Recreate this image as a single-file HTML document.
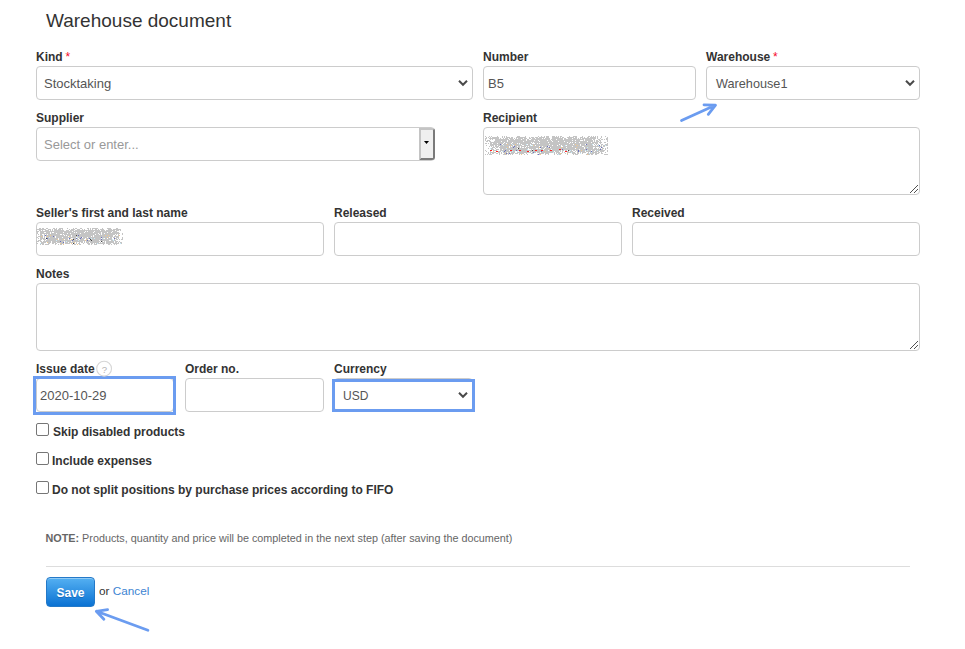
<!DOCTYPE html>
<html><head><meta charset="utf-8">
<style>
html,body{margin:0;padding:0;background:#fff;width:965px;height:649px;overflow:hidden;position:relative;font-family:"Liberation Sans",sans-serif;}
.a{position:absolute;}
.t{position:absolute;white-space:nowrap;line-height:14px;}
.lbl{font-weight:bold;font-size:12px;color:#333;}
.box{position:absolute;box-sizing:border-box;border:1px solid #ccc;border-radius:4px;background:#fff;}
.val{position:absolute;white-space:nowrap;font-size:13px;line-height:14px;color:#555;}
.req{color:#f50a2a;font-weight:normal;margin-left:-0.5px;}
.chev{position:absolute;}
.cb{position:absolute;box-sizing:border-box;width:13px;height:13px;border:1px solid #767676;border-radius:2px;background:#fff;}
.blue{position:absolute;box-sizing:border-box;border:3px solid #6b9cf0;}
</style></head>
<body>
<!-- title -->
<div class="t" style="left:46px;top:10.8px;font-size:19px;line-height:20px;color:#333;">Warehouse document</div>

<!-- Row 1 -->
<div class="t lbl" style="left:36px;top:50px;">Kind <span class="req">*</span></div>
<div class="box" style="left:36px;top:66px;width:437px;height:34px;"></div>
<div class="val" style="left:44px;top:77px;">Stocktaking</div>
<svg class="chev" style="left:452px;top:74px" width="22" height="18"><polyline points="7,6.8 11,10.8 15,6.8" fill="none" stroke="#4a4a4a" stroke-width="2"/></svg>

<div class="t lbl" style="left:483px;top:50px;">Number</div>
<div class="box" style="left:483px;top:66px;width:213px;height:34px;"></div>
<div class="val" style="left:488px;top:77px;">B5</div>

<div class="t lbl" style="left:706px;top:50px;">Warehouse <span class="req">*</span></div>
<div class="box" style="left:706px;top:66px;width:214px;height:34px;"></div>
<div class="val" style="left:716px;top:77px;font-size:12.7px;">Warehouse1</div>
<svg class="chev" style="left:899px;top:74px" width="22" height="18"><polyline points="7,6.8 11,10.8 15,6.8" fill="none" stroke="#4a4a4a" stroke-width="2"/></svg>

<!-- Row 2 -->
<div class="t lbl" style="left:36px;top:111px;">Supplier</div>
<div class="box" style="left:36px;top:127px;width:399px;height:34px;"></div>
<div class="val" style="left:44px;top:138px;color:#999;">Select or enter...</div>
<div class="a" style="left:419px;top:128px;width:16px;height:32px;box-sizing:border-box;background:#efefef;border-left:2px solid #c4c4c4;border-top:2px solid #c4c4c4;border-right:2px solid #7a7a7a;border-bottom:2px solid #7a7a7a;border-top-right-radius:3px;border-bottom-right-radius:3px;"></div>
<svg class="a" style="left:424px;top:141px" width="6" height="4"><polygon points="0,0 5,0 2.5,3" fill="#000"/></svg>

<div class="t lbl" style="left:483px;top:111px;">Recipient</div>
<div class="box" style="left:483px;top:127px;width:437px;height:68px;"></div>

<!-- Row 3 -->
<div class="t lbl" style="left:36px;top:206px;">Seller's first and last name</div>
<div class="box" style="left:36px;top:222px;width:288px;height:34px;"></div>
<div class="t lbl" style="left:334px;top:206px;">Released</div>
<div class="box" style="left:334px;top:222px;width:288px;height:34px;"></div>
<div class="t lbl" style="left:632px;top:206px;">Received</div>
<div class="box" style="left:632px;top:222px;width:288px;height:34px;"></div>

<!-- Row 4 -->
<div class="t lbl" style="left:36px;top:267px;">Notes</div>
<div class="box" style="left:36px;top:283px;width:884px;height:68px;"></div>

<!-- Row 5 -->
<div class="t lbl" style="left:36px;top:362px;">Issue date</div>
<div class="box" style="left:36px;top:378px;width:138px;height:34px;"></div>
<div class="val" style="left:40px;top:389px;">2020-10-29</div>
<div class="t lbl" style="left:185px;top:362px;">Order no.</div>
<div class="box" style="left:185px;top:378px;width:139px;height:34px;"></div>
<div class="t lbl" style="left:334px;top:362px;">Currency</div>
<div class="box" style="left:334px;top:378px;width:139px;height:34px;"></div>
<div class="val" style="left:343px;top:388.5px;font-size:12px;">USD</div>
<svg class="chev" style="left:452px;top:386px" width="22" height="18"><polyline points="7,6.8 11,10.8 15,6.8" fill="none" stroke="#4a4a4a" stroke-width="2"/></svg>

<div class="blue" style="left:33px;top:376px;width:143px;height:39px;"></div>
<div class="blue" style="left:332px;top:379px;width:143px;height:33px;"></div>

<!-- checkboxes -->
<div class="cb" style="left:36px;top:423px;"></div>
<div class="t lbl" style="left:53px;top:425px;">Skip disabled products</div>
<div class="cb" style="left:36px;top:452px;"></div>
<div class="t lbl" style="left:52px;top:454px;">Include expenses</div>
<div class="cb" style="left:36px;top:481px;"></div>
<div class="t lbl" style="left:52px;top:483px;">Do not split positions by purchase prices according to FIFO</div>

<!-- note -->
<div class="t" style="left:45.5px;top:531px;font-size:10.8px;color:#666;"><b style="color:#666">NOTE:</b> Products, quantity and price will be completed in the next step (after saving the document)</div>
<div class="a" style="left:46px;top:566px;width:864px;height:1px;background:#ddd;"></div>

<!-- buttons -->
<div class="a" style="left:46px;top:577px;width:49px;height:30px;box-sizing:border-box;border:1px solid #2479c8;border-radius:4px;background:linear-gradient(#54b0f2,#0b72d3);box-shadow:inset 0 1px 0 rgba(255,255,255,.35);"></div>
<div class="t" style="left:56.5px;top:585.5px;font-size:12px;font-weight:bold;color:#fff;text-shadow:0 1px 0 rgba(0,40,100,.3);">Save</div>
<div class="t" style="left:99px;top:583.6px;font-size:11.75px;color:#333;">or <span style="color:#3d84d2">Cancel</span></div>


<!-- question mark -->
<svg class="a" style="left:95px;top:360px" width="18" height="17"><circle cx="9.1" cy="8.7" r="7.4" fill="none" stroke="#d6d6d6" stroke-width="1.1"/><text x="9.3" y="13.1" text-anchor="middle" font-family="Liberation Sans" font-size="9.6" fill="#b4b4b4">?</text></svg>
<!-- resize handles -->
<svg class="a" style="left:0;top:0" width="965" height="649"><path fill="#505050" d="M910 192h1v1h-1zM911 191h1v1h-1zM912 190h1v1h-1zM913 189h1v1h-1zM914 188h1v1h-1zM915 187h1v1h-1zM916 186h1v1h-1zM917 185h1v1h-1zM914 192h1v1h-1zM915 191h1v1h-1zM916 190h1v1h-1zM917 189h1v1h-1zM910 348h1v1h-1zM911 347h1v1h-1zM912 346h1v1h-1zM913 345h1v1h-1zM914 344h1v1h-1zM915 343h1v1h-1zM916 342h1v1h-1zM917 341h1v1h-1zM914 348h1v1h-1zM915 347h1v1h-1zM916 346h1v1h-1zM917 345h1v1h-1z"/></svg>
<!-- blobs -->
<svg class="a" style="left:0;top:0" width="965" height="649"><path fill="#c4c4c4" d="M485 136h1v1h-1zM489 136h1v1h-1zM491 136h1v1h-1zM497 136h1v1h-1zM502 136h1v1h-1zM504 136h1v1h-1zM506 136h1v1h-1zM517 136h3v1h-3zM525 136h1v1h-1zM538 136h1v1h-1zM541 136h1v1h-1zM544 136h1v1h-1zM546 136h3v1h-3zM552 136h3v1h-3zM556 136h1v1h-1zM558 136h1v1h-1zM560 136h2v1h-2zM569 136h1v1h-1zM573 136h4v1h-4zM582 136h1v1h-1zM588 136h2v1h-2zM591 136h1v1h-1zM593 136h1v1h-1zM595 136h1v1h-1zM597 136h1v1h-1zM601 136h1v1h-1zM605 136h1v1h-1zM486 137h1v1h-1zM488 137h1v1h-1zM490 137h1v1h-1zM492 137h7v1h-7zM502 137h1v1h-1zM504 137h1v1h-1zM506 137h4v1h-4zM511 137h2v1h-2zM516 137h10v1h-10zM529 137h1v1h-1zM531 137h3v1h-3zM535 137h3v1h-3zM539 137h6v1h-6zM546 137h3v1h-3zM552 137h7v1h-7zM560 137h1v1h-1zM562 137h2v1h-2zM567 137h7v1h-7zM575 137h2v1h-2zM580 137h3v1h-3zM584 137h1v1h-1zM587 137h2v1h-2zM590 137h6v1h-6zM597 137h1v1h-1zM601 137h1v1h-1zM607 137h1v1h-1zM485 138h2v1h-2zM489 138h10v1h-10zM500 138h1v1h-1zM503 138h1v1h-1zM505 138h3v1h-3zM509 138h4v1h-4zM514 138h1v1h-1zM516 138h1v1h-1zM518 138h5v1h-5zM524 138h3v1h-3zM529 138h2v1h-2zM532 138h3v1h-3zM536 138h6v1h-6zM543 138h1v1h-1zM545 138h5v1h-5zM552 138h11v1h-11zM564 138h2v1h-2zM568 138h4v1h-4zM573 138h4v1h-4zM578 138h1v1h-1zM580 138h1v1h-1zM582 138h14v1h-14zM597 138h1v1h-1zM600 138h1v1h-1zM606 138h2v1h-2zM485 139h1v1h-1zM490 139h1v1h-1zM492 139h1v1h-1zM495 139h14v1h-14zM510 139h4v1h-4zM515 139h6v1h-6zM522 139h4v1h-4zM527 139h2v1h-2zM531 139h19v1h-19zM551 139h5v1h-5zM557 139h6v1h-6zM564 139h20v1h-20zM585 139h7v1h-7zM593 139h2v1h-2zM598 139h2v1h-2zM601 139h2v1h-2zM604 139h1v1h-1zM606 139h2v1h-2zM485 140h1v1h-1zM487 140h3v1h-3zM495 140h12v1h-12zM508 140h18v1h-18zM527 140h7v1h-7zM535 140h3v1h-3zM539 140h8v1h-8zM548 140h3v1h-3zM552 140h20v1h-20zM573 140h2v1h-2zM576 140h4v1h-4zM583 140h1v1h-1zM585 140h8v1h-8zM594 140h1v1h-1zM596 140h2v1h-2zM599 140h2v1h-2zM607 140h1v1h-1zM486 141h2v1h-2zM489 141h2v1h-2zM494 141h7v1h-7zM502 141h5v1h-5zM508 141h15v1h-15zM524 141h15v1h-15zM540 141h12v1h-12zM553 141h5v1h-5zM559 141h5v1h-5zM565 141h22v1h-22zM588 141h5v1h-5zM594 141h1v1h-1zM596 141h3v1h-3zM600 141h1v1h-1zM607 141h1v1h-1zM490 142h14v1h-14zM505 142h7v1h-7zM513 142h18v1h-18zM532 142h1v1h-1zM534 142h14v1h-14zM549 142h18v1h-18zM568 142h2v1h-2zM571 142h1v1h-1zM573 142h2v1h-2zM576 142h3v1h-3zM580 142h11v1h-11zM592 142h6v1h-6zM599 142h3v1h-3zM604 142h2v1h-2zM485 143h2v1h-2zM488 143h1v1h-1zM490 143h2v1h-2zM493 143h4v1h-4zM498 143h5v1h-5zM504 143h2v1h-2zM507 143h4v1h-4zM512 143h5v1h-5zM518 143h1v1h-1zM520 143h12v1h-12zM535 143h2v1h-2zM538 143h1v1h-1zM540 143h29v1h-29zM570 143h24v1h-24zM595 143h3v1h-3zM600 143h1v1h-1zM607 143h1v1h-1zM490 144h10v1h-10zM501 144h1v1h-1zM503 144h4v1h-4zM508 144h4v1h-4zM513 144h2v1h-2zM516 144h3v1h-3zM520 144h1v1h-1zM522 144h4v1h-4zM528 144h2v1h-2zM531 144h18v1h-18zM550 144h9v1h-9zM560 144h13v1h-13zM574 144h1v1h-1zM576 144h4v1h-4zM581 144h4v1h-4zM587 144h5v1h-5zM594 144h1v1h-1zM596 144h1v1h-1zM598 144h1v1h-1zM601 144h2v1h-2zM605 144h3v1h-3zM486 145h1v1h-1zM490 145h4v1h-4zM495 145h2v1h-2zM498 145h5v1h-5zM504 145h6v1h-6zM511 145h2v1h-2zM514 145h8v1h-8zM524 145h6v1h-6zM534 145h1v1h-1zM536 145h16v1h-16zM553 145h4v1h-4zM558 145h3v1h-3zM562 145h3v1h-3zM567 145h10v1h-10zM578 145h2v1h-2zM581 145h12v1h-12zM595 145h1v1h-1zM597 145h1v1h-1zM601 145h1v1h-1zM603 145h2v1h-2zM606 145h2v1h-2zM489 146h1v1h-1zM491 146h1v1h-1zM493 146h1v1h-1zM495 146h4v1h-4zM500 146h9v1h-9zM510 146h1v1h-1zM512 146h2v1h-2zM515 146h2v1h-2zM518 146h2v1h-2zM521 146h5v1h-5zM527 146h1v1h-1zM529 146h10v1h-10zM540 146h2v1h-2zM543 146h4v1h-4zM549 146h12v1h-12zM563 146h9v1h-9zM573 146h9v1h-9zM584 146h18v1h-18zM603 146h2v1h-2zM492 147h3v1h-3zM496 147h2v1h-2zM499 147h8v1h-8zM508 147h1v1h-1zM510 147h3v1h-3zM514 147h6v1h-6zM521 147h1v1h-1zM524 147h1v1h-1zM526 147h13v1h-13zM541 147h4v1h-4zM546 147h3v1h-3zM551 147h10v1h-10zM562 147h4v1h-4zM567 147h9v1h-9zM577 147h7v1h-7zM585 147h2v1h-2zM588 147h5v1h-5zM595 147h1v1h-1zM599 147h1v1h-1zM602 147h1v1h-1zM607 147h1v1h-1zM488 148h1v1h-1zM491 148h2v1h-2zM495 148h1v1h-1zM500 148h6v1h-6zM507 148h10v1h-10zM519 148h9v1h-9zM529 148h7v1h-7zM538 148h1v1h-1zM541 148h3v1h-3zM545 148h4v1h-4zM550 148h25v1h-25zM576 148h8v1h-8zM585 148h8v1h-8zM594 148h3v1h-3zM598 148h1v1h-1zM600 148h1v1h-1zM602 148h2v1h-2zM605 148h1v1h-1zM607 148h1v1h-1zM491 149h3v1h-3zM496 149h3v1h-3zM500 149h2v1h-2zM503 149h24v1h-24zM531 149h1v1h-1zM533 149h10v1h-10zM544 149h7v1h-7zM552 149h7v1h-7zM561 149h1v1h-1zM563 149h16v1h-16zM580 149h6v1h-6zM587 149h13v1h-13zM601 149h2v1h-2zM605 149h1v1h-1zM485 150h1v1h-1zM493 150h4v1h-4zM500 150h5v1h-5zM506 150h3v1h-3zM512 150h4v1h-4zM517 150h2v1h-2zM521 150h11v1h-11zM533 150h2v1h-2zM537 150h4v1h-4zM543 150h5v1h-5zM549 150h1v1h-1zM552 150h9v1h-9zM562 150h2v1h-2zM565 150h2v1h-2zM569 150h1v1h-1zM571 150h1v1h-1zM573 150h2v1h-2zM576 150h2v1h-2zM579 150h2v1h-2zM582 150h3v1h-3zM586 150h1v1h-1zM588 150h3v1h-3zM592 150h3v1h-3zM596 150h1v1h-1zM598 150h7v1h-7zM607 150h1v1h-1zM486 151h1v1h-1zM490 151h1v1h-1zM498 151h3v1h-3zM503 151h1v1h-1zM505 151h7v1h-7zM513 151h2v1h-2zM519 151h8v1h-8zM530 151h11v1h-11zM542 151h3v1h-3zM546 151h8v1h-8zM555 151h4v1h-4zM560 151h1v1h-1zM562 151h1v1h-1zM567 151h2v1h-2zM570 151h3v1h-3zM575 151h1v1h-1zM577 151h1v1h-1zM579 151h6v1h-6zM586 151h5v1h-5zM592 151h2v1h-2zM595 151h4v1h-4zM600 151h4v1h-4zM607 151h1v1h-1zM488 152h1v1h-1zM490 152h6v1h-6zM498 152h2v1h-2zM501 152h1v1h-1zM503 152h4v1h-4zM508 152h2v1h-2zM511 152h4v1h-4zM517 152h14v1h-14zM532 152h1v1h-1zM534 152h2v1h-2zM537 152h3v1h-3zM541 152h12v1h-12zM554 152h1v1h-1zM556 152h4v1h-4zM562 152h1v1h-1zM564 152h1v1h-1zM567 152h4v1h-4zM572 152h3v1h-3zM577 152h2v1h-2zM580 152h1v1h-1zM582 152h4v1h-4zM588 152h1v1h-1zM590 152h1v1h-1zM592 152h5v1h-5zM598 152h2v1h-2zM601 152h1v1h-1zM605 152h1v1h-1zM488 153h1v1h-1zM490 153h1v1h-1zM492 153h2v1h-2zM496 153h2v1h-2zM499 153h1v1h-1zM501 153h1v1h-1zM504 153h1v1h-1zM507 153h2v1h-2zM510 153h4v1h-4zM515 153h3v1h-3zM519 153h5v1h-5zM526 153h1v1h-1zM531 153h2v1h-2zM539 153h5v1h-5zM545 153h4v1h-4zM554 153h1v1h-1zM556 153h1v1h-1zM558 153h2v1h-2zM561 153h1v1h-1zM565 153h1v1h-1zM572 153h4v1h-4zM577 153h2v1h-2zM582 153h1v1h-1zM587 153h2v1h-2zM590 153h4v1h-4zM595 153h4v1h-4zM601 153h2v1h-2zM485 154h1v1h-1zM487 154h1v1h-1zM489 154h3v1h-3zM499 154h1v1h-1zM503 154h4v1h-4zM508 154h1v1h-1zM510 154h1v1h-1zM512 154h1v1h-1zM519 154h1v1h-1zM524 154h1v1h-1zM527 154h1v1h-1zM537 154h1v1h-1zM539 154h1v1h-1zM545 154h1v1h-1zM548 154h1v1h-1zM554 154h1v1h-1zM557 154h1v1h-1zM559 154h2v1h-2zM567 154h1v1h-1zM573 154h1v1h-1zM575 154h3v1h-3zM586 154h1v1h-1zM588 154h2v1h-2zM591 154h2v1h-2zM595 154h2v1h-2zM604 154h4v1h-4z"/><path fill="#6a70c0" d="M500 144h1v1h-1zM586 144h1v1h-1zM599 145h1v1h-1zM514 146h1v1h-1zM547 146h1v1h-1zM513 147h1v1h-1zM540 147h1v1h-1zM549 147h1v1h-1zM601 147h1v1h-1zM562 149h1v1h-1zM586 149h1v1h-1zM600 149h1v1h-1zM505 150h1v1h-1zM516 150h1v1h-1zM578 150h1v1h-1zM504 151h1v1h-1zM541 151h1v1h-1zM578 151h1v1h-1zM591 151h1v1h-1zM533 152h1v1h-1zM506 153h1v1h-1zM509 153h1v1h-1zM538 154h1v1h-1z"/><path fill="#f0c890" d="M507 144h1v1h-1zM515 144h1v1h-1zM575 144h1v1h-1zM510 145h1v1h-1zM533 145h1v1h-1zM577 145h1v1h-1zM507 147h1v1h-1zM539 147h1v1h-1zM561 147h1v1h-1zM576 147h1v1h-1zM549 148h1v1h-1zM581 150h1v1h-1zM493 151h1v1h-1zM545 151h1v1h-1zM505 153h1v1h-1zM560 153h1v1h-1zM567 153h1v1h-1zM521 154h1v1h-1zM540 154h1v1h-1zM587 154h1v1h-1z"/><path fill="#c8ecfa" d="M512 144h1v1h-1zM519 144h1v1h-1zM526 144h1v1h-1zM592 144h1v1h-1zM503 145h1v1h-1zM530 145h1v1h-1zM532 145h1v1h-1zM565 145h1v1h-1zM598 145h1v1h-1zM605 145h1v1h-1zM587 147h1v1h-1zM490 148h1v1h-1zM506 148h1v1h-1zM527 149h1v1h-1zM570 150h1v1h-1zM585 150h1v1h-1zM587 150h1v1h-1zM597 150h1v1h-1zM502 151h1v1h-1zM512 151h1v1h-1zM517 151h1v1h-1zM553 152h1v1h-1zM571 152h1v1h-1zM591 152h1v1h-1zM533 153h1v1h-1zM580 153h1v1h-1zM589 153h1v1h-1zM558 154h1v1h-1z"/><path fill="#444444" d="M518 148h1v1h-1zM532 150h1v1h-1zM568 150h1v1h-1z"/><path fill="#ff2020" d="M559 149h2v1h-2zM490 150h2v1h-2zM510 150h2v1h-2zM519 150h2v1h-2zM535 150h2v1h-2zM541 150h2v1h-2zM550 150h2v1h-2zM496 151h2v1h-2zM527 151h2v1h-2zM565 151h2v1h-2z"/><path fill="#c4c4c4" d="M39 228h2v1h-2zM42 228h2v1h-2zM46 228h2v1h-2zM53 228h2v1h-2zM56 228h1v1h-1zM59 228h4v1h-4zM67 228h1v1h-1zM73 228h1v1h-1zM75 228h2v1h-2zM80 228h2v1h-2zM87 228h2v1h-2zM90 228h1v1h-1zM92 228h6v1h-6zM102 228h1v1h-1zM107 228h4v1h-4zM116 228h2v1h-2zM36 229h10v1h-10zM48 229h3v1h-3zM52 229h1v1h-1zM54 229h3v1h-3zM58 229h3v1h-3zM62 229h1v1h-1zM69 229h1v1h-1zM71 229h4v1h-4zM77 229h3v1h-3zM82 229h1v1h-1zM84 229h1v1h-1zM88 229h1v1h-1zM90 229h1v1h-1zM92 229h1v1h-1zM95 229h2v1h-2zM98 229h1v1h-1zM100 229h4v1h-4zM108 229h4v1h-4zM113 229h8v1h-8zM36 230h1v1h-1zM39 230h2v1h-2zM42 230h1v1h-1zM45 230h4v1h-4zM50 230h1v1h-1zM52 230h1v1h-1zM54 230h10v1h-10zM66 230h3v1h-3zM70 230h4v1h-4zM75 230h25v1h-25zM101 230h4v1h-4zM106 230h9v1h-9zM116 230h3v1h-3zM120 230h1v1h-1zM36 231h3v1h-3zM40 231h32v1h-32zM73 231h12v1h-12zM86 231h1v1h-1zM88 231h6v1h-6zM95 231h17v1h-17zM113 231h4v1h-4zM37 232h1v1h-1zM40 232h4v1h-4zM46 232h4v1h-4zM51 232h1v1h-1zM54 232h9v1h-9zM64 232h10v1h-10zM75 232h1v1h-1zM77 232h7v1h-7zM85 232h8v1h-8zM94 232h7v1h-7zM102 232h5v1h-5zM108 232h3v1h-3zM112 232h7v1h-7zM37 233h1v1h-1zM40 233h10v1h-10zM51 233h5v1h-5zM57 233h10v1h-10zM68 233h2v1h-2zM71 233h9v1h-9zM81 233h17v1h-17zM99 233h2v1h-2zM102 233h2v1h-2zM105 233h15v1h-15zM122 233h1v1h-1zM38 234h1v1h-1zM40 234h2v1h-2zM44 234h1v1h-1zM46 234h1v1h-1zM48 234h12v1h-12zM62 234h1v1h-1zM64 234h31v1h-31zM96 234h3v1h-3zM100 234h1v1h-1zM102 234h13v1h-13zM116 234h1v1h-1zM118 234h1v1h-1zM122 234h1v1h-1zM40 235h3v1h-3zM44 235h1v1h-1zM46 235h4v1h-4zM51 235h13v1h-13zM65 235h1v1h-1zM67 235h4v1h-4zM72 235h4v1h-4zM77 235h1v1h-1zM79 235h14v1h-14zM94 235h11v1h-11zM106 235h2v1h-2zM109 235h4v1h-4zM115 235h1v1h-1zM118 235h1v1h-1zM38 236h3v1h-3zM42 236h1v1h-1zM44 236h1v1h-1zM46 236h1v1h-1zM48 236h5v1h-5zM54 236h1v1h-1zM56 236h12v1h-12zM70 236h1v1h-1zM72 236h19v1h-19zM92 236h1v1h-1zM94 236h19v1h-19zM114 236h5v1h-5zM36 237h2v1h-2zM40 237h3v1h-3zM44 237h1v1h-1zM46 237h3v1h-3zM50 237h5v1h-5zM56 237h6v1h-6zM63 237h13v1h-13zM78 237h3v1h-3zM83 237h4v1h-4zM88 237h13v1h-13zM102 237h5v1h-5zM108 237h1v1h-1zM110 237h2v1h-2zM113 237h2v1h-2zM116 237h3v1h-3zM122 237h1v1h-1zM38 238h1v1h-1zM40 238h5v1h-5zM48 238h10v1h-10zM59 238h9v1h-9zM70 238h1v1h-1zM73 238h3v1h-3zM77 238h1v1h-1zM79 238h1v1h-1zM81 238h4v1h-4zM86 238h3v1h-3zM90 238h1v1h-1zM92 238h2v1h-2zM95 238h6v1h-6zM102 238h1v1h-1zM105 238h2v1h-2zM108 238h4v1h-4zM115 238h2v1h-2zM118 238h1v1h-1zM122 238h1v1h-1zM40 239h2v1h-2zM43 239h3v1h-3zM47 239h10v1h-10zM59 239h4v1h-4zM65 239h3v1h-3zM69 239h1v1h-1zM72 239h1v1h-1zM74 239h2v1h-2zM77 239h2v1h-2zM80 239h4v1h-4zM87 239h1v1h-1zM91 239h10v1h-10zM102 239h10v1h-10zM114 239h1v1h-1zM116 239h2v1h-2zM119 239h1v1h-1zM121 239h2v1h-2zM36 240h1v1h-1zM38 240h3v1h-3zM44 240h1v1h-1zM46 240h10v1h-10zM57 240h15v1h-15zM73 240h5v1h-5zM79 240h6v1h-6zM86 240h1v1h-1zM88 240h3v1h-3zM92 240h7v1h-7zM100 240h9v1h-9zM111 240h2v1h-2zM114 240h2v1h-2zM36 241h3v1h-3zM40 241h2v1h-2zM43 241h8v1h-8zM52 241h8v1h-8zM61 241h3v1h-3zM65 241h1v1h-1zM67 241h4v1h-4zM72 241h11v1h-11zM84 241h1v1h-1zM86 241h14v1h-14zM102 241h1v1h-1zM104 241h1v1h-1zM106 241h8v1h-8zM115 241h3v1h-3zM119 241h1v1h-1zM36 242h1v1h-1zM41 242h5v1h-5zM48 242h3v1h-3zM52 242h4v1h-4zM57 242h6v1h-6zM65 242h3v1h-3zM69 242h5v1h-5zM76 242h1v1h-1zM79 242h1v1h-1zM81 242h2v1h-2zM84 242h1v1h-1zM86 242h3v1h-3zM90 242h9v1h-9zM100 242h1v1h-1zM102 242h3v1h-3zM106 242h8v1h-8zM115 242h2v1h-2zM118 242h1v1h-1zM120 242h2v1h-2zM36 243h2v1h-2zM41 243h3v1h-3zM48 243h2v1h-2zM52 243h2v1h-2zM55 243h2v1h-2zM61 243h3v1h-3zM65 243h5v1h-5zM74 243h1v1h-1zM76 243h1v1h-1zM78 243h2v1h-2zM83 243h1v1h-1zM87 243h3v1h-3zM91 243h2v1h-2zM94 243h1v1h-1zM96 243h1v1h-1zM98 243h7v1h-7zM106 243h5v1h-5zM113 243h6v1h-6zM121 243h1v1h-1zM40 244h1v1h-1zM42 244h2v1h-2zM45 244h4v1h-4zM55 244h1v1h-1zM58 244h1v1h-1zM60 244h2v1h-2zM72 244h1v1h-1zM74 244h2v1h-2zM79 244h2v1h-2zM88 244h2v1h-2zM91 244h1v1h-1zM94 244h3v1h-3zM103 244h1v1h-1zM108 244h2v1h-2zM111 244h1v1h-1zM114 244h1v1h-1zM116 244h1v1h-1z"/><path fill="#6a70c0" d="M45 235h1v1h-1zM78 235h1v1h-1zM53 236h1v1h-1zM81 237h1v1h-1zM101 237h1v1h-1zM47 238h1v1h-1zM69 238h1v1h-1zM76 238h1v1h-1zM80 238h1v1h-1zM89 238h1v1h-1zM114 238h1v1h-1zM101 239h1v1h-1zM72 240h1v1h-1zM87 240h1v1h-1zM60 241h1v1h-1zM63 242h1v1h-1z"/><path fill="#f0c890" d="M50 235h1v1h-1zM105 235h1v1h-1zM108 235h1v1h-1zM119 235h1v1h-1zM41 236h1v1h-1zM47 236h1v1h-1zM69 236h1v1h-1zM107 237h1v1h-1zM57 239h1v1h-1zM63 239h1v1h-1zM71 239h1v1h-1zM86 239h1v1h-1zM85 240h1v1h-1zM47 242h1v1h-1zM74 242h1v1h-1zM60 243h1v1h-1zM71 243h1v1h-1zM63 244h1v1h-1zM77 244h1v1h-1z"/><path fill="#444444" d="M76 235h1v1h-1zM46 238h1v1h-1zM73 239h1v1h-1zM90 239h1v1h-1zM91 240h1v1h-1zM101 241h1v1h-1zM73 243h1v1h-1z"/><path fill="#c8ecfa" d="M49 237h1v1h-1zM77 237h1v1h-1zM91 238h1v1h-1zM94 238h1v1h-1zM103 238h1v1h-1zM112 239h1v1h-1zM56 240h1v1h-1zM78 240h1v1h-1zM113 240h1v1h-1zM66 241h1v1h-1zM40 243h1v1h-1zM97 243h1v1h-1zM120 243h1v1h-1z"/></svg>
<!-- arrows -->
<svg class="a" style="left:0;top:0" width="965" height="649">
<g fill="none" stroke="#6b9cf0" stroke-width="2.8" stroke-linecap="round" stroke-linejoin="round">
<path d="M681.5,120.5 L715.2,105.2 M704,104.8 L715.5,105.2 L708.3,114.3"/>
<path d="M147.9,630.3 L96.5,611.3 M107.6,609.7 L96.3,611.3 L103.9,619.3"/>
</g>
</svg>
</body></html>
